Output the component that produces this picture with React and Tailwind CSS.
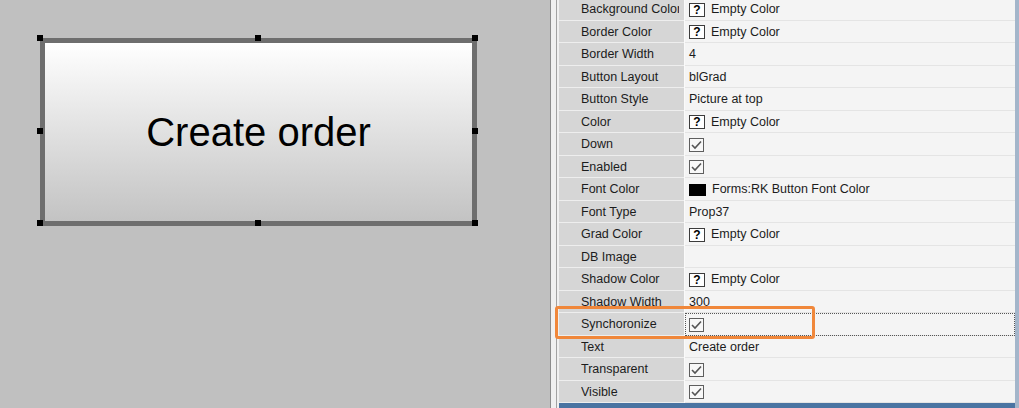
import React from "react";

const font = { fontFamily: '"Liberation Sans", Arial, sans-serif' };

const props = [
  { name: "Background Color", kind: "empty" },
  { name: "Border Color", kind: "empty" },
  { name: "Border Width", kind: "text", value: "4" },
  { name: "Button Layout", kind: "text", value: "blGrad" },
  { name: "Button Style", kind: "text", value: "Picture at top" },
  { name: "Color", kind: "empty" },
  { name: "Down", kind: "check" },
  { name: "Enabled", kind: "check" },
  { name: "Font Color", kind: "black", value: "Forms:RK Button Font Color" },
  { name: "Font Type", kind: "text", value: "Prop37" },
  { name: "Grad Color", kind: "empty" },
  { name: "DB Image", kind: "text", value: "" },
  { name: "Shadow Color", kind: "empty" },
  { name: "Shadow Width", kind: "text", value: "300" },
  { name: "Synchoronize", kind: "check", focus: true },
  { name: "Text", kind: "text", value: "Create order" },
  { name: "Transparent", kind: "check" },
  { name: "Visible", kind: "check" },
];

const handles = [
  [40, 38], [258, 38], [475, 38],
  [40, 131], [475, 131],
  [40, 223], [258, 223], [475, 223],
];

const CheckBox = () => (
  <svg width="15" height="14" viewBox="0 0 15 14" className="block">
    <rect x="0.5" y="0.5" width="14" height="13" fill="#f8f8f8" stroke="#5e5e5e" />
    <path d="M3 7 L6 10 L12 3.5" fill="none" stroke="#555" strokeWidth="1.6" />
  </svg>
);

const Value = ({ p }) => {
  if (p.kind === "empty")
    return (
      <div className="flex items-center gap-[6px]">
        <div className="w-[16px] h-[14px] border border-[#3c3c3c] bg-white flex items-center justify-center text-[12px] font-bold leading-none text-black">
          ?
        </div>
        <span>Empty Color</span>
      </div>
    );
  if (p.kind === "black")
    return (
      <div className="flex items-center gap-[6px]">
        <div className="w-[17px] h-[12px] bg-black" />
        <span>{p.value}</span>
      </div>
    );
  if (p.kind === "check") return <CheckBox />;
  return <span>{p.value}</span>;
};

export default function App() {
  return (
    <div className="flex w-[1019px] h-[408px] overflow-hidden" style={font}>
      {/* design canvas */}
      <div className="relative w-[550px] shrink-0 bg-[#c0c0c0] pl-[40px] pt-[38px]">
        <div className="w-[437px] h-[188px] border-[5px] border-[#6e6e6e] bg-linear-to-b from-white to-[#c3c3c3] flex items-center justify-center">
          <span className="text-[40px] leading-none text-black">Create order</span>
        </div>
        {handles.map(([x, y], i) => (
          <div
            key={i}
            className="absolute w-[6px] h-[6px] bg-black"
            style={{ left: x - 3, top: y - 3 }}
          />
        ))}
      </div>

      {/* property inspector */}
      <div className="relative flex flex-1 bg-[#f0f0f0]">
        <div className="w-px bg-[#8c8c8c]" />
        <div className="w-[5px]" />
        <div className="w-px bg-[#a2a2a2]" />
        <div className="flex flex-col flex-1 pl-[2px] mt-[-2px]">
          {props.map((p) => (
            <div key={p.name} className="flex h-[22.5px] shrink-0 text-[12.5px] text-[#1c1c1c]">
              <div className="w-[125px] shrink-0 bg-[#d6d6d6] border-b border-[#eeeeee] pl-[22px] pt-[2px] flex items-center overflow-hidden whitespace-nowrap">
                <span className="block w-[98px] overflow-hidden">{p.name}</span>
              </div>
              <div className="w-px bg-[#fafafa]" />
              <div
                className={
                  "flex-1 flex items-center pl-[4px] pt-[2px] bg-[#f4f4f4] border-b border-[#e4e4e4] whitespace-nowrap" +
                  (p.focus ? " outline outline-dotted outline-[#555] -outline-offset-1" : "")
                }
              >
                <Value p={p} />
              </div>
            </div>
          ))}
          <div className="flex-1 bg-[#4a74a2]" />
        </div>
        <div className="w-[4px] bg-[#a3b5ca]" />

        {/* highlight */}
        <div className="absolute left-[5px] top-[306px] w-[260px] h-[33px] border-[3px] border-[#f0873a] rounded-[3px]" />
      </div>
    </div>
  );
}
